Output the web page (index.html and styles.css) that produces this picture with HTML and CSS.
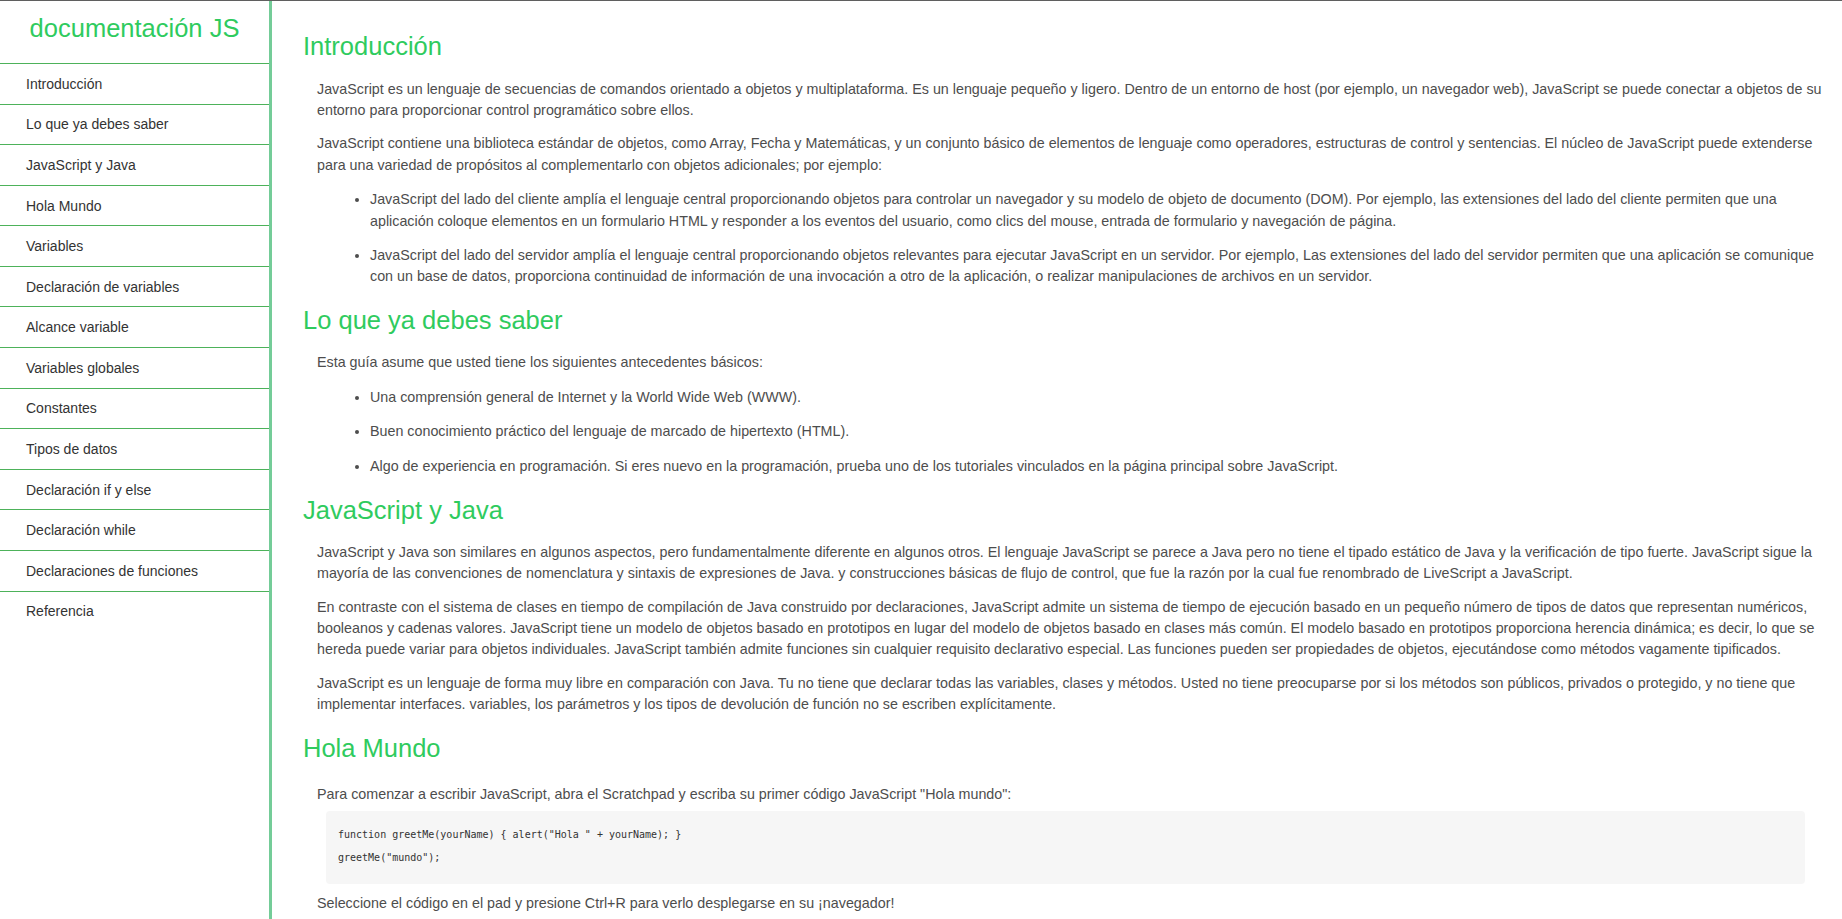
FILE: index.html
```html
<!DOCTYPE html>
<html lang="es">
<head>
<meta charset="utf-8">
<title>documentación JS</title>
<link rel="stylesheet" href="styles.css">
</head>
<body>
<div class="page">
  <nav class="sidebar" id="navbar">
    <header class="brand">documentación JS</header>
    <a class="nav-link" href="#Introducción">Introducción</a>
    <a class="nav-link" href="#Lo_que_ya_debes_saber">Lo que ya debes saber</a>
    <a class="nav-link" href="#JavaScript_y_Java">JavaScript y Java</a>
    <a class="nav-link" href="#Hola_Mundo">Hola Mundo</a>
    <a class="nav-link" href="#Variables">Variables</a>
    <a class="nav-link" href="#Declaración_de_variables">Declaración de variables</a>
    <a class="nav-link" href="#Alcance_variable">Alcance variable</a>
    <a class="nav-link" href="#Variables_globales">Variables globales</a>
    <a class="nav-link" href="#Constantes">Constantes</a>
    <a class="nav-link" href="#Tipos_de_datos">Tipos de datos</a>
    <a class="nav-link" href="#Declaración_if_y_else">Declaración if y else</a>
    <a class="nav-link" href="#Declaración_while">Declaración while</a>
    <a class="nav-link" href="#Declaraciones_de_funciones">Declaraciones de funciones</a>
    <a class="nav-link" href="#Referencia">Referencia</a>
  </nav>
  <main class="content" id="main-doc">
    <section class="doc-section" id="Introducción">
      <h2 class="doc-title">Introducción</h2>
      <p class="doc-text">JavaScript es un lenguaje de secuencias de comandos orientado a objetos y multiplataforma. Es un lenguaje pequeño y ligero. Dentro de un entorno de host (por ejemplo, un navegador web), JavaScript se puede conectar a objetos de su entorno para proporcionar control programático sobre ellos.</p>
      <p class="doc-text">JavaScript contiene una biblioteca estándar de objetos, como Array, Fecha y Matemáticas, y un conjunto básico de elementos de lenguaje como operadores, estructuras de control y sentencias. El núcleo de JavaScript puede extenderse para una variedad de propósitos al complementarlo con objetos adicionales; por ejemplo:</p>
      <ul class="doc-list">
        <li>JavaScript del lado del cliente amplía el lenguaje central proporcionando objetos para controlar un navegador y su modelo de objeto de documento (DOM). Por ejemplo, las extensiones del lado del cliente permiten que una aplicación coloque elementos en un formulario HTML y responder a los eventos del usuario, como clics del mouse, entrada de formulario y navegación de página.</li>
        <li>JavaScript del lado del servidor amplía el lenguaje central proporcionando objetos relevantes para ejecutar JavaScript en un servidor. Por ejemplo, Las extensiones del lado del servidor permiten que una aplicación se comunique con un base de datos, proporciona continuidad de información de una invocación a otro de la aplicación, o realizar manipulaciones de archivos en un servidor.</li>
      </ul>
    </section>
    <section class="doc-section" id="Lo_que_ya_debes_saber">
      <h2 class="doc-title">Lo que ya debes saber</h2>
      <p class="doc-text">Esta guía asume que usted tiene los siguientes antecedentes básicos:</p>
      <ul class="doc-list">
        <li>Una comprensión general de Internet y la World Wide Web (WWW).</li>
        <li>Buen conocimiento práctico del lenguaje de marcado de hipertexto (HTML).</li>
        <li>Algo de experiencia en programación. Si eres nuevo en la programación, prueba uno de los tutoriales vinculados en la página principal sobre JavaScript.</li>
      </ul>
    </section>
    <section class="doc-section" id="JavaScript_y_Java">
      <h2 class="doc-title">JavaScript y Java</h2>
      <p class="doc-text">JavaScript y Java son similares en algunos aspectos, pero fundamentalmente diferente en algunos otros. El lenguaje JavaScript se parece a Java pero no tiene el tipado estático de Java y la verificación de tipo fuerte. JavaScript sigue la mayoría de las convenciones de nomenclatura y sintaxis de expresiones de Java. y construcciones básicas de flujo de control, que fue la razón por la cual fue renombrado de LiveScript a JavaScript.</p>
      <p class="doc-text">En contraste con el sistema de clases en tiempo de compilación de Java construido por declaraciones, JavaScript admite un sistema de tiempo de ejecución basado en un pequeño número de tipos de datos que representan numéricos, booleanos y cadenas valores. JavaScript tiene un modelo de objetos basado en prototipos en lugar del modelo de objetos basado en clases más común. El modelo basado en prototipos proporciona herencia dinámica; es decir, lo que se hereda puede variar para objetos individuales. JavaScript también admite funciones sin cualquier requisito declarativo especial. Las funciones pueden ser propiedades de objetos, ejecutándose como métodos vagamente tipificados.</p>
      <p class="doc-text">JavaScript es un lenguaje de forma muy libre en comparación con Java. Tu no tiene que declarar todas las variables, clases y métodos. Usted no tiene preocuparse por si los métodos son públicos, privados o protegido, y no tiene que implementar interfaces. variables, los parámetros y los tipos de devolución de función no se escriben explícitamente.</p>
    </section>
    <section class="doc-section" id="Hola_Mundo">
      <h2 class="doc-title">Hola Mundo</h2>
      <p class="doc-text before-code">Para comenzar a escribir JavaScript, abra el Scratchpad y escriba su primer código JavaScript "Hola mundo":</p>
      <pre class="code-block"><code>function greetMe(yourName) { alert("Hola " + yourName); }
greetMe("mundo");</code></pre>
      <p class="doc-text">Seleccione el código en el pad y presione Ctrl+R para verlo desplegarse en su ¡navegador!</p>
    </section>
  </main>
</div>
</body>
</html>
```

FILE: styles.css
```css
html, body {
  margin: 0;
  padding: 0;
  height: 100%;
  overflow: hidden;
  background: #ffffff;
}

body {
  font-family: "Liberation Sans", Arial, Helvetica, sans-serif;
  border-top: 1px solid #5f5f5f;
  box-sizing: border-box;
}

.page {
  display: flex;
  height: 100%;
}

.sidebar {
  flex: 0 0 269px;
  display: flex;
  flex-direction: column;
  border-right: 3px solid #74cc98;
}

.brand {
  height: 62px;
  box-sizing: border-box;
  padding-top: 12.6px;
  text-align: center;
  font-size: 25.5px;
  line-height: 29px;
  color: #2fcb5e;
}

.nav-link {
  display: flex;
  align-items: center;
  height: 39.58px;
  padding-left: 26px;
  border-top: 1px solid #4db25a;
  font-size: 14px;
  color: #333333;
  text-decoration: none;
}

.content {
  flex: 1;
  min-width: 0;
  padding: 30px 6px 0 31px;
  overflow: hidden;
}

.doc-section {
  padding-bottom: 4.8px;
}

.doc-title {
  margin: 0 0 17.5px;
  font-size: 25.5px;
  line-height: 30px;
  font-weight: normal;
  color: #2fcb5e;
}

.doc-text {
  margin: 0 0 12.5px 14px;
  font-size: 14.3px;
  line-height: 21.2px;
  color: #4d4d4d;
}

.doc-list {
  margin: 13.5px 0 0 14px;
  padding-left: 53px;
  font-size: 14.3px;
  line-height: 21.2px;
  color: #4d4d4d;
}

.doc-list li {
  margin-bottom: 13px;
}

.before-code {
  margin-top: 21px;
  margin-bottom: 6px;
}

.code-block {
  margin: 0 31px 9px 23px;
  padding: 13px 12px 14px;
  background: #f6f6f6;
  border-radius: 4px;
  font-family: "Liberation Mono", "DejaVu Sans Mono", monospace;
  font-size: 10px;
  line-height: 22px;
  color: #333333;
  white-space: pre;
}
```
